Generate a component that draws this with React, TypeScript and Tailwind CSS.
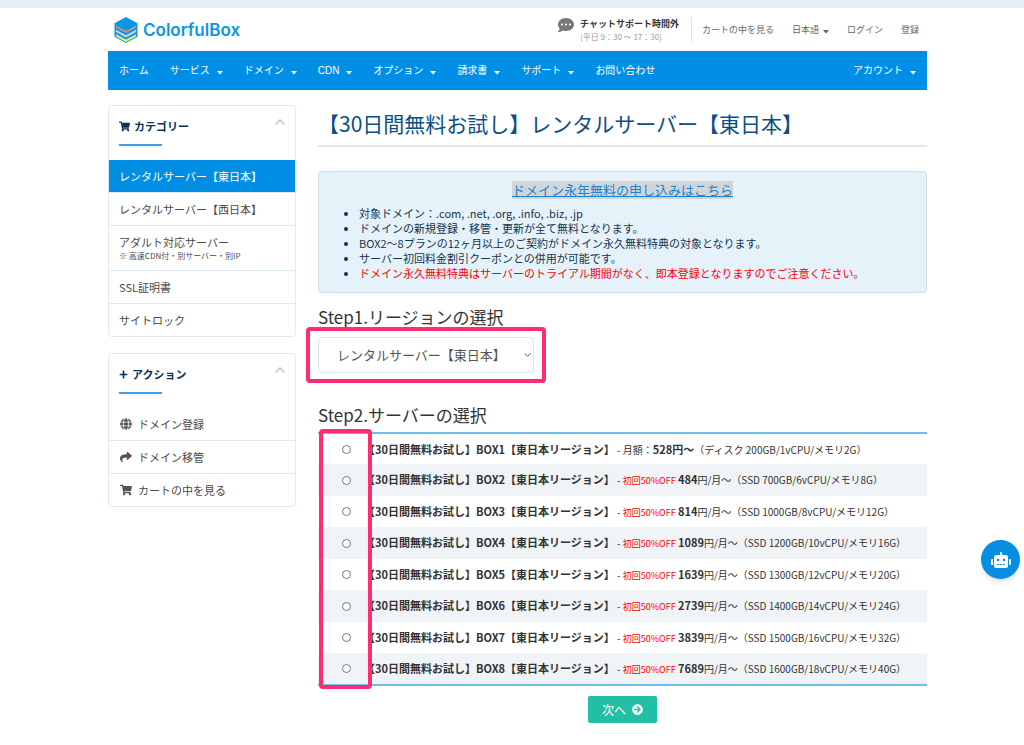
import React, { useState } from "react";
import {
  FaArrowCircleRight,
  FaCommentDots,
  FaGlobe,
  FaPlus,
  FaRobot,
  FaShare,
  FaShoppingCart,
} from "react-icons/fa";

const navItems = [
  { label: "ホーム", menu: false },
  { label: "サービス", menu: true },
  { label: "ドメイン", menu: true },
  { label: "CDN", menu: true },
  { label: "オプション", menu: true },
  { label: "請求書", menu: true },
  { label: "サポート", menu: true },
  { label: "お問い合わせ", menu: false },
];

const categories = [
  { label: "レンタルサーバー【東日本】", active: true },
  { label: "レンタルサーバー【西日本】" },
  { label: "アダルト対応サーバー", note: "※ 高速CDN付・別サーバー・別IP" },
  { label: "SSL証明書" },
  { label: "サイトロック" },
];

const actions = [
  { label: "ドメイン登録", icon: FaGlobe },
  { label: "ドメイン移管", icon: FaShare },
  { label: "カートの中を見る", icon: FaShoppingCart },
];

const plans = [
  { name: "BOX1", price: "528", spec: "（ディスク 200GB/1vCPU/メモリ2G）" },
  { name: "BOX2", price: "484", spec: "（SSD 700GB/6vCPU/メモリ8G）" },
  { name: "BOX3", price: "814", spec: "（SSD 1000GB/8vCPU/メモリ12G）" },
  { name: "BOX4", price: "1089", spec: "（SSD 1200GB/10vCPU/メモリ16G）" },
  { name: "BOX5", price: "1639", spec: "（SSD 1300GB/12vCPU/メモリ20G）" },
  { name: "BOX6", price: "2739", spec: "（SSD 1400GB/14vCPU/メモリ24G）" },
  { name: "BOX7", price: "3839", spec: "（SSD 1500GB/16vCPU/メモリ32G）" },
  { name: "BOX8", price: "7689", spec: "（SSD 1600GB/18vCPU/メモリ40G）" },
];

const Caret: React.FC = () => (
  <svg viewBox="0 0 6 4" className="mt-1 h-1 w-1.5" fill="currentColor" aria-hidden="true">
    <path d="M0 0h6L3 3.4z" />
  </svg>
);

const Chevron: React.FC<{ className: string; up?: boolean }> = ({ className, up }) => (
  <svg viewBox="0 0 10 6" className={className} fill="none" stroke="currentColor" aria-hidden="true">
    <path d={up ? "M.7 5.3 5 1l4.300 4.300" : "M.7.7 5 5 9.300.7"} strokeWidth="1.5" />
  </svg>
);

const Logo: React.FC = () => (
  <a href="#" className="flex items-center gap-[5px] text-[#0a97e6]">
    <svg viewBox="0 0 24 26" className="h-[26px] w-6" aria-hidden="true">
      <path d="M12 0 23.500 6.300v13.400L12 26 .5 19.700V6.300z" fill="#0a97e6" />
      <path d="M2 8.400 12 13.800l10-5.400v2.300L12 16.100 2 10.700z" fill="#b9957f" />
      <path d="M2 12.800 12 18.200l10-5.400v2.300L12 20.500 2 15.100z" fill="#dcc9ee" />
      <path d="M2 17.200 12 22.600l10-5.400v2.300L12 24.900 2 19.500z" fill="#e4f45a" />
    </svg>
    <span className="font-['Inter',sans-serif] text-[17px] leading-6 font-semibold">ColorfulBox</span>
  </a>
);

const Panel: React.FC<{ title: string; icon: React.ReactNode; children: React.ReactNode }> = ({
  title,
  icon,
  children,
}) => (
  <section className="rounded-sm border border-[#dfebf4]">
    <div className="h-[54px] px-2.5 pt-2.5">
      <div className="flex justify-between">
        <h2 className="flex items-center gap-1 leading-5 font-bold text-[#0b3358]">
          {icon}
          {title}
        </h2>
        <button type="button" aria-label={title} className="h-3 text-[#c3c6c8]">
          <Chevron up className="h-1.5 w-2.5" />
        </button>
      </div>
      <div className="mt-2 h-0.5 w-[43px] bg-[#3d9ff0]" />
    </div>
    <ul className="divide-y divide-[#dfebf4]">{children}</ul>
  </section>
);

const App: React.FC = () => {
  const [region, setRegion] = useState("east");
  const [plan, setPlan] = useState("");

  return (
    <div
      lang="ja"
      className="min-h-screen border-t-8 border-[#e6eef2] bg-white pr-[97px] pl-[108px] font-['Noto_Sans_CJK_JP',sans-serif] text-[11px] text-[#4a4a4a]"
    >
      <header className="flex h-[43px] items-center justify-between pr-2 pl-1.5">
        <Logo />
        <div className="flex items-center text-[9px] text-[#666]">
          <div className="flex gap-1.5 border-r border-[#dfe6ea] pr-3">
            <FaCommentDots className="size-4 text-[#777]" />
            <div>
              <p className="text-[9px] leading-[14px] font-bold text-[#333]">チャットサポート時間外</p>
              <p className="text-[8px] leading-[11px] text-[#999]">(平日 9：30 ～ 17：30)</p>
            </div>
          </div>
          <nav className="flex gap-[18px] pl-2.5 leading-4">
            <a href="#">カートの中を見る</a>
            <a href="#" className="flex items-center gap-1">
              日本語
              <Caret />
            </a>
            <a href="#">ログイン</a>
            <a href="#">登録</a>
          </nav>
        </div>
      </header>

      <nav className="flex h-[39px] items-center justify-between bg-[#008fe5] px-[11px] font-['Liberation_Sans','Noto_Sans_CJK_JP',sans-serif] text-[10px] text-white">
        <ul className="flex gap-[21px]">
          {navItems.map((item) => (
            <li key={item.label}>
              <a href="#" className="flex items-center gap-[7px]">
                {item.label}
                {item.menu && <Caret />}
              </a>
            </li>
          ))}
        </ul>
        <a href="#" className="flex items-center gap-[7px]">
          アカウント
          <Caret />
        </a>
      </nav>

      <div className="flex gap-[22px] pt-[15px]">
        <aside className="flex w-[188px] shrink-0 flex-col gap-4">
          <Panel title="カテゴリー" icon={<FaShoppingCart className="size-[11px]" />}>
            {categories.map((item) => (
              <li key={item.label}>
                <a
                  href="#"
                  className={
                    item.active
                      ? "block bg-[#008fe5] px-2.5 py-2 leading-4 text-white"
                      : "block px-2.5 py-2 leading-4"
                  }
                >
                  {item.label}
                  {item.note && <span className="block text-[8px] leading-3">{item.note}</span>}
                </a>
              </li>
            ))}
          </Panel>
          <Panel title="アクション" icon={<FaPlus className="size-[9px]" />}>
            {actions.map((item) => (
              <li key={item.label}>
                <a href="#" className="flex items-center gap-1.5 px-[11px] py-2 leading-4">
                  <item.icon className="size-3 text-[#555]" />
                  {item.label}
                </a>
              </li>
            ))}
          </Panel>
        </aside>

        <main className="min-w-0 flex-1">
          <h1 className="border-b-2 border-[#e1e6ea] pb-1 text-[21px] leading-9 text-[#0b4f85]">
            【30日間無料お試し】レンタルサーバー【東日本】
          </h1>

          <div className="mt-6 rounded-sm border border-[#cfdfe6] bg-[#e5f2fa] pt-[9px] pb-[7px] text-[#14344f]">
            <p className="pb-[7px] text-center text-[13px] leading-[18px]">
              <a href="#" className="inline-block bg-[#d0d5d8] text-[#1c84d2] underline">
                ドメイン永年無料の申し込みはこちら
              </a>
            </p>
            <ul className="list-disc pb-1 pl-10 leading-[15px]">
              <li>対象ドメイン：.com, .net, .org, .info, .biz, .jp</li>
              <li>ドメインの新規登録・移管・更新が全て無料となります。</li>
              <li>BOX2〜8プランの12ヶ月以上のご契約がドメイン永久無料特典の対象となります。</li>
              <li>サーバー初回料金割引クーポンとの併用が可能です。</li>
              <li>
                <span className="text-[#ff0000]">
                  ドメイン永久無料特典はサーバーのトライアル期間がなく、即本登録となりますのでご注意ください。
                </span>
              </li>
            </ul>
          </div>

          <form onSubmit={(e) => e.preventDefault()}>
            <h2 className="mt-3 text-[17px] leading-6 text-[#333]">
              <label htmlFor="region">Step1.リージョンの選択</label>
            </h2>
            <div className="relative mt-2 w-[216px]">
              <select
                id="region"
                value={region}
                onChange={(e) => setRegion(e.target.value)}
                className="h-9 w-full appearance-none rounded-sm border border-[#d8e7f0] bg-white pl-[18px] text-[13px] text-[#555]"
              >
                <option value="east">レンタルサーバー【東日本】</option>
                <option value="west">レンタルサーバー【西日本】</option>
              </select>
              <Chevron className="pointer-events-none absolute top-4 right-[3px] h-1 w-[7px] text-[#555]" />
              <div className="pointer-events-none absolute -inset-x-3 -inset-y-2.5 rounded-sm border-4 border-[#ff2d6f]" />
            </div>

            <h2 className="mt-[30px] text-[17px] leading-6 text-[#333]">Step2.サーバーの選択</h2>
            <div className="relative mt-[5px]">
              <table className="w-full table-fixed border-y-2 border-[#6cc0f0] text-[#333]">
                <tbody>
                  {plans.map((item, i) => (
                    <tr key={item.name} className="odd:h-[31px] even:h-8 even:bg-[#f0f4f7]">
                      <td className="w-[46px] pl-6">
                        <input
                          type="radio"
                          id={item.name}
                          name="plan"
                          checked={plan === item.name}
                          onChange={() => setPlan(item.name)}
                          className="block size-[9px] appearance-none rounded-full border border-[#777] bg-white checked:border-[3px] checked:border-[#008fe5]"
                        />
                      </td>
                      <td className="text-[10px] leading-5 whitespace-nowrap">
                        <label htmlFor={item.name}>
                          <b className="text-[11px]">【30日間無料お試し】{item.name}【東日本リージョン】</b>
                          {" - "}
                          {i === 0 ? (
                            <>
                              月額：<b className="text-[11px]">{item.price}円〜</b>
                            </>
                          ) : (
                            <>
                              <span className="text-[9px] text-[#ff0000]">初回50%OFF</span>{" "}
                              <b className="text-[11px]">{item.price}</b>
                              円/月〜
                            </>
                          )}
                          {item.spec}
                        </label>
                      </td>
                    </tr>
                  ))}
                </tbody>
              </table>
              <div className="pointer-events-none absolute -inset-y-[3px] left-px w-[53px] rounded-sm border-4 border-[#ff2d6f]" />
            </div>

            <div className="flex justify-center pt-2.5 pb-5">
              <button
                type="submit"
                className="flex h-[27px] items-center gap-1.5 rounded-xs bg-[#22bfa6] px-3.5 text-xs text-white"
              >
                次へ
                <FaArrowCircleRight className="size-[11px]" />
              </button>
            </div>
          </form>
        </main>
      </div>

      <button
        type="button"
        aria-label="チャット"
        className="fixed top-[540px] right-1 flex size-[39px] items-center justify-center rounded-full bg-[#078de3] text-white shadow-md"
      >
        <FaRobot className="size-5" />
      </button>
    </div>
  );
};

export default App;
